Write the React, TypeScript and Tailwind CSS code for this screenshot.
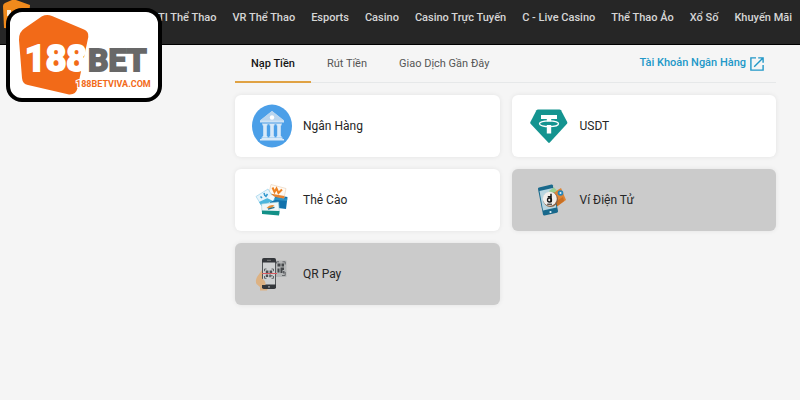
import React, { useState } from 'react';

const navItems = [
  'TI Thể Thao',
  'VR Thể Thao',
  'Esports',
  'Casino',
  'Casino Trực Tuyến',
  'C - Live Casino',
  'Thể Thao Ảo',
  'Xổ Số',
  'Khuyến Mãi',
];

const tabs = ['Nạp Tiền', 'Rút Tiền', 'Giao Dịch Gần Đây'];

interface PaymentMethod {
  id: string;
  name: string;
  icon: React.ReactNode;
  muted?: boolean;
}

function BankIcon() {
  return (
    <svg viewBox="0 0 40 44" className="h-11 w-10" aria-hidden="true">
      <ellipse cx="20" cy="22" rx="20" ry="21.5" fill="#4b9fe8" />
      <path d="M20 7L32 16.5V18.5H8V16.5Z" fill="#cfe3f5" />
      <path d="M20 7L32 16.5H8Z" fill="#b9d5ee" />
      <circle cx="20" cy="13.5" r="2.2" fill="#fff" />
      <path d="M10 18.5H30V20.5H10Z" fill="#8fc0ec" />
      <g fill="#d8e9f8">
        <path d="M10.5 20H15.5V21.5H14.8V32H15.5V33.5H10.5V32H11.2V21.5H10.5Z" />
        <path d="M17.5 20H22.5V21.5H21.8V32H22.5V33.5H17.5V32H18.2V21.5H17.5Z" />
        <path d="M24.5 20H29.5V21.5H28.8V32H29.5V33.5H24.5V32H25.2V21.5H24.5Z" />
        <path d="M9.5 33.5H30.5V35H32V36.5H8V35H9.5Z" />
      </g>
    </svg>
  );
}

function UsdtIcon() {
  return (
    <svg viewBox="0 0 40 44" className="h-11 w-10" aria-hidden="true">
      <path d="M9 5.5H30.5Q31.5 5.5 32 6.3L38.2 18Q38.7 19 38 19.8L20.8 38.6Q20 39.4 19.2 38.6L1.6 19.8Q.9 19 1.4 18L7.5 6.3Q8 5.5 9 5.5Z" fill="#149490" />
      <path d="M12 11H28V15H22.2V17.5H17.8V15H12ZM17.8 21H22.2V29.5H17.8Z" fill="#fff" />
      <ellipse cx="20" cy="19.8" rx="9.5" ry="2.9" fill="none" stroke="#fff" strokeWidth="1.3" />
    </svg>
  );
}

function ScratchCardIcon() {
  return (
    <svg viewBox="0 0 40 44" className="h-11 w-10" aria-hidden="true">
      <path d="M18 16L35.5 19L34 31L18 29Z" fill="#1272ac" />
      <path d="M19 19L35.3 20.5L35 23L19 21.5Z" fill="#2f93c4" />
      <path d="M19 6.5L34 10.5L32 20L16.5 17Z" fill="#fffaf3" stroke="#e5cdb3" strokeWidth=".6" />
      <path d="M20.5 9.5L22.5 14L24.5 10.5L26.5 15L30 11.5" fill="none" stroke="#ee8222" strokeWidth="2" />
      <path d="M18 15.5L32.5 18L32 20.5L17.5 18Z" fill="#e58331" />
      <path d="M4 18.5L16 11L21 19L9.5 27.5Z" fill="#e8f5fc" stroke="#8ccbe8" strokeWidth=".6" />
      <path d="M8.5 18.5L10 20M12 15L13 18M15.5 16L13.5 19" stroke="#3399ce" strokeWidth="1.5" />
      <path d="M7 24L21 17.5L23 22L9.5 28Z" fill="#4bb6dd" />
      <path d="M15 20L20 17L23 19L21 23Z" fill="#f4fbff" />
      <path d="M9.5 26L26.5 24L27.5 35.5L10 34Z" fill="#eff7f8" stroke="#9bced6" strokeWidth=".6" />
      <path d="M14.5 30Q18 26 22.5 27.5Q20 31 14.5 30Z" fill="#e4913c" />
      <path d="M16 31.2L22.5 29.4" stroke="#236e88" strokeWidth="1.2" />
      <path d="M10 32.5L27.5 33L27 37.5L10 36Z" fill="#129087" />
    </svg>
  );
}

function WalletIcon() {
  return (
    <svg viewBox="0 0 40 44" className="h-11 w-10" aria-hidden="true">
      <path d="M22 16L32 10L37 22L26 30L21 27Z" fill="#dd8435" />
      <path d="M26 24L34 19L35 23L27 29Z" fill="#c96f23" />
      <path d="M10 9.5L22.5 6.5Q23.5 6.3 23.8 7.3L29 33Q29.2 34.3 28 34.7L15.5 37.5Q14.3 37.7 14 36.5L9 11Q8.8 9.8 10 9.5Z" fill="#19698c" />
      <path d="M10.5 13L23.7 10L27.4 29.5L14 32.5Z" fill="#b8d5df" />
      <circle cx="21.5" cy="34" r="1.1" fill="#e8f6fb" />
      <path d="M20 13L25 9.5L28 12.5L22 17Z" fill="#99cf93" />
      <circle cx="31.5" cy="15" r="2.8" fill="#2585b9" />
      <circle cx="31.5" cy="15" r="1" fill="#e2f2fa" />
      <circle cx="21.5" cy="21.5" r="7.5" fill="#8b6244" />
      <circle cx="20.8" cy="20.8" r="7" fill="#f2efeb" />
      <path d="M18.8 18.7H22.8M22 15.8V24.2" stroke="#171717" strokeWidth="1.5" />
      <circle cx="20.5" cy="22" r="2" fill="none" stroke="#171717" strokeWidth="1.3" />
      <path d="M18.2 26.2H23" stroke="#171717" strokeWidth="1" />
    </svg>
  );
}

function QrIcon() {
  return (
    <svg viewBox="0 0 40 44" className="h-11 w-10" aria-hidden="true">
      <path d="M10 18L5 25Q3 29 4.5 32L8 35V38.5H15L17 33L11 26Z" fill="#ddb283" />
      <path d="M22 8.5H34.5V25H22Z" fill="#b4b6b7" />
      <path d="M24.5 11.5V9.8H27M30.5 9.8H33.2V12.5M33.2 20V23.5H30" fill="none" stroke="#66696b" strokeWidth="1" />
      <path d="M25.5 11.5H28.5V14.5H25.5ZM29.5 11.5H32V14.5H29.5ZM25.5 16.5H27.5V20.5H25.5ZM28.5 15.5H32V18H30.5V21H28.5ZM31.2 19H32.4V21.5H31.2Z" fill="#45484b" />
      <rect x="10" y="6" width="14" height="31" rx="1.8" fill="#34373b" />
      <path d="M10.8 10.5H23.2V32.5H10.8Z" fill="#cfd1d2" />
      <path d="M15 8.3H19" stroke="#888" strokeWidth=".8" />
      <path d="M12.5 19.2V17H14.5M19.5 17H21.5V19.2M12.5 24V26.3H14.5M19.5 26.3H21.5V24" fill="none" stroke="#55585a" strokeWidth=".9" />
      <path d="M13.8 18.4H16.4V21H13.8ZM17.6 18.4H20.2V21H17.6ZM13.8 22.4H16.2V25H13.8ZM17.3 22.4H18.8V25.2H17.3ZM19.3 23H20.4V24.5H19.3Z" fill="#4b4e51" />
      <path d="M10 21.5H25" stroke="#d65a60" strokeWidth="1" />
      <path d="M9 26Q14 28 13.5 33H9Z" fill="#ddb283" />
      <circle cx="17" cy="34.8" r=".9" fill="#aaa" />
    </svg>
  );
}

function ExternalIcon() {
  return (
    <svg viewBox="0 0 14 14" className="size-3.5" fill="none" stroke="currentColor" strokeWidth="1.4" aria-hidden="true">
      <path d="M6 .9H.9V13.1H13.1V8" />
      <path d="M8.2 .9H13.1V5.8M13 1L4.2 9.8" />
    </svg>
  );
}

// Logo plate that hangs over the header and the page
function Logo() {
  return (
    <a
      href="#"
      aria-label="188BET"
      className="absolute top-2 left-1.5 block rounded-2xl border-4 border-black bg-white"
    >
      <svg
        viewBox="0 0 148 86"
        className="h-[86px] w-[148px]"
        fontFamily="Roboto, sans-serif"
        fontWeight="700"
      >
        <path
          d="M32 4.2Q37 2 42 4L74 17.5Q79 19.5 78.3 25L67.5 76Q66 83 59 82.5L18 73Q12.5 72 12 66L9 28Q8.5 20 15 16Z"
          fill="#f26a18"
        />
        <text x="15" y="59" fontSize="36" fill="#fff" stroke="#fff" strokeWidth="2">188</text>
        <text x="78" y="59" fontSize="32" fill="#686868" stroke="#686868" strokeWidth="2">BET</text>
        <text x="66" y="75" fontSize="9" fill="#f26a18" stroke="#fff" strokeWidth="2" paintOrder="stroke">
          188BETVIVA.COM
        </text>
      </svg>
    </a>
  );
}

const methods: PaymentMethod[] = [
  { id: 'bank', name: 'Ngân Hàng', icon: <BankIcon /> },
  { id: 'usdt', name: 'USDT', icon: <UsdtIcon /> },
  { id: 'card', name: 'Thẻ Cào', icon: <ScratchCardIcon /> },
  { id: 'wallet', name: 'Ví Điện Tử', icon: <WalletIcon />, muted: true },
  { id: 'qr', name: 'QR Pay', icon: <QrIcon />, muted: true },
];

function Header() {
  return (
    <header className="flex h-[45px] items-start justify-between border-b border-black bg-[#262626] pr-2 pl-0.5">
      <svg viewBox="0 0 30 32" className="h-8 w-[30px] shrink-0" aria-hidden="true">
        <path d="M10 0H14L28 5L26 30L2 28L1 6Q1 4 3 3Z" fill="#f08a1c" />
        <path d="M5 10H9V16H5Z" fill="#fdf0dc" />
      </svg>
      <nav className="flex gap-4 pt-2.5 text-[11px] leading-4 font-medium whitespace-nowrap text-[#d6d6d6]">
        {navItems.map(item => (
          <a key={item} href="#" className="hover:text-white">
            {item}
          </a>
        ))}
      </nav>
    </header>
  );
}

function MethodCard({ name, icon, muted }: PaymentMethod) {
  return (
    <button
      type="button"
      className={`flex h-[62px] items-center gap-[11px] rounded-md pl-[17px] text-left text-xs text-[#262626] shadow-[0_0_5px_rgba(0,0,0,0.08)] ${
        muted ? 'bg-[#cbcbcb]' : 'bg-white'
      }`}
    >
      {icon}
      <span>{name}</span>
    </button>
  );
}

function App() {
  const [activeTab, setActiveTab] = useState(tabs[0]);

  return (
    <div className="relative min-h-screen bg-[#f5f5f5] font-['Roboto',sans-serif]">
      <Header />
      <Logo />
      <main className="mr-6 ml-[235px]">
        <div className="flex h-[38px] items-stretch border-b border-[#e6e8e9] text-[11px]">
          {tabs.map(tab => (
            <button
              key={tab}
              type="button"
              onClick={() => setActiveTab(tab)}
              className={`-mb-px border-b-2 px-4 pt-0.5 ${
                activeTab === tab
                  ? 'border-[#e0a243] font-medium text-[#161616]'
                  : 'border-transparent text-[#555]'
              }`}
            >
              {tab}
            </button>
          ))}
          <a href="#" className="ml-auto flex items-center gap-1 pr-3 font-medium text-[#2298c8]">
            Tài Khoản Ngân Hàng
            <ExternalIcon />
          </a>
        </div>
        <div className="grid grid-cols-2 gap-3 pt-3">
          {methods.map(method => (
            <MethodCard key={method.id} {...method} />
          ))}
        </div>
      </main>
    </div>
  );
}

export default App;
